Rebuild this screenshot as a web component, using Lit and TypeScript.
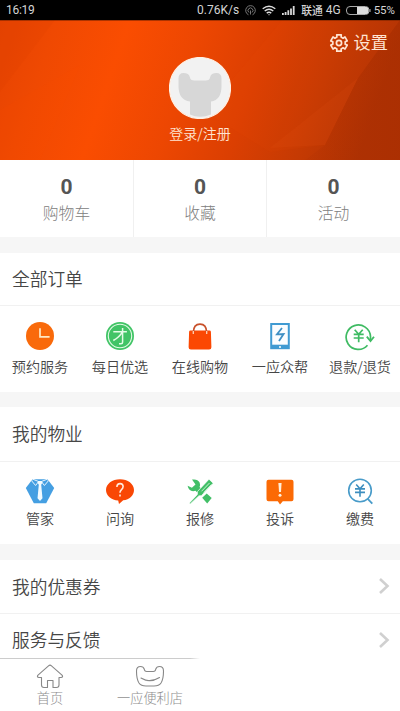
import { LitElement, html, svg, css, type SVGTemplateResult } from "lit";
import { customElement } from "lit/decorators.js";

interface Entry {
  label: string;
  icon: SVGTemplateResult;
}

// Every grid icon is drawn on a 30x30 canvas.
const clock = svg`<circle cx="15" cy="15" r="14" fill="#f96a0b"/><path d="M15 7.2v8.6h9.6" fill="none" stroke="#ffe9c4" stroke-width="1.7"/>`;
const group = svg`<circle cx="15" cy="15" r="14" fill="#41c466"/><circle cx="15" cy="15" r="11.7" fill="none" stroke="#e4fbe6" stroke-width="1.1"/><path d="M8.3 10.8h13.6M17.6 6.9v14.3q0 1.5-1.6 1.5h-2M17.3 11.2q-3 5.2-9 8.3" fill="none" stroke="#e4fbe6" stroke-width="1.5"/>`;
const bag = svg`<path d="M5.500 9.500h19q1.300 0 1.400 1.300l.5 15.500q0 2.300-2.300 2.300H5.900q-2.300 0-2.300-2.300l.5-15.500q.1-1.300 1.400-1.300z" fill="#fb4803"/><path d="M8.300 11.500C8.500 6 11 3.200 15 3.200s6.500 2.800 6.700 8.300" fill="none" stroke="#c8502a" stroke-width="1.700"/><path d="M8.300 10v3M21.700 10v3" stroke="#ffd2b4" stroke-width="1.300"/>`;
const phone = svg`<path d="M5.200 2h19.600v26.200H5.200z" fill="#3f9ad2"/><path d="M7.200 4h15.600v19.700H7.200z" fill="#fafdff"/><path d="M17 7l-5 6.300 6.600-.3-4.600 7" fill="none" stroke="#3f8fc4" stroke-width="1.800"/><circle cx="15" cy="26" r="1" fill="#fff"/>`;
const refund = svg`<path d="M22.500 24.200A12.200 12.200 0 1 1 25.500 15.500v3.500" fill="none" stroke="#3fbb63" stroke-width="1.700"/><path d="M21.800 15.700l3.700 4.300 3.500-4.300" fill="none" stroke="#3fbb63" stroke-width="1.800"/><path d="M9.700 8.700l4 4.500 4-4.500M8.700 13.300h10M8.700 17h10M13.700 13v8.300" fill="none" stroke="#3fbb63" stroke-width="1.700"/>`;
const butler = svg`<path d="M7.500 3.200h15L29.200 12l-8 15.300H8.800L.8 12z" fill="#459fe2"/><path d="M8 3.300l5.600 2.200-3 4-4-4.700zM22 3.300l-5.600 2.200 3 4 4-4.700z" fill="#459fe2" stroke="#e8f6ff" stroke-width="1"/><path d="M13.200 5h3.600l.6 1.800-1.200 2 1.300 13.500L15 25l-2.500-2.700 1.300-13.500-1.200-2z" fill="#f3fbff"/>`;
const ask = svg`<path d="M15 3.200c7.800 0 14 4.600 14 10.700 0 5.400-4.600 9.500-10.800 10.400L14 28l-.800-3.500C6.400 23.900 1 19.500 1 13.900 1 7.800 7.200 3.200 15 3.200z" fill="#f94705"/><path d="M11.900 11q.1-3.400 3.200-3.400 3 0 3 3 0 1.700-1.600 3-1.500 1.300-1.500 3.200M15 18.500v2" fill="none" stroke="#ffe9dc" stroke-width="1.600"/>`;
const repair = svg`<path d="M7 3.600q5.500-1 7.600 3 .9 2.200 0 4.400l5 5-3.800 4-5.300-5.200Q4 16.500 2.600 9.700l4.300 2 3.600-3.300z" fill="#42bf67"/><path d="M17.200 21.800l4.500-4.300 5 4.500-4.500 5.500z" fill="#42bf67"/><path d="M24 3.200l4.200 4-11.700 12.300-2.700.4-8.300 7.800-1 .2.200-1.100 7.600-8.200.3-3.200z" fill="#42bf67" stroke="#fff" stroke-width=".7"/><path d="M16.500 15.300l8-8.300M18.700 16.500l7.600-7.800" stroke="#e8fbe9" stroke-width=".8"/>`;
const complain = svg`<path d="M3.500 3.800h23q2 0 2 2v17.500q0 2-2 2h-8.700L15 28.500l-2.200-3.200H3.500q-2 0-2-2V5.800q0-2 2-2z" fill="#fb6a05"/><path d="M13.400 7h3.200l-.6 9h-2z" fill="#ffeeda"/><circle cx="15" cy="19.300" r="1.500" fill="#ffeeda"/>`;
const pay = svg`<circle cx="15" cy="14.500" r="11.300" fill="none" stroke="#489bc9" stroke-width="1.600"/><path d="M22.500 22.700l4.800 5" stroke="#489bc9" stroke-width="1.800"/><path d="M11.200 8.500l3.800 4.200 3.800-4.200M10 12.900h10M10 16.400h10M15 12.500v8.300" fill="none" stroke="#3d8ebf" stroke-width="1.600"/>`;

const orders: Entry[] = [
  { label: "预约服务", icon: clock },
  { label: "每日优选", icon: group },
  { label: "在线购物", icon: bag },
  { label: "一应众帮", icon: phone },
  { label: "退款/退货", icon: refund },
];
const property: Entry[] = [
  { label: "管家", icon: butler },
  { label: "问询", icon: ask },
  { label: "报修", icon: repair },
  { label: "投诉", icon: complain },
  { label: "缴费", icon: pay },
];
const stats = ["购物车", "收藏", "活动"];

function gearPath(): string {
  const pts: string[] = [];
  for (let i = 0; i < 6; i++) {
    const mid = (i * Math.PI) / 3 - Math.PI / 2;
    for (const [off, r] of [[-0.34, 6.3], [-0.27, 8.5], [0.27, 8.5], [0.34, 6.3]]) {
      pts.push(`${(10 + r * Math.cos(mid + off)).toFixed(2)} ${(10 + r * Math.sin(mid + off)).toFixed(2)}`);
    }
  }
  return `M${pts.join("L")}z`;
}

@customElement("app-root")
export class AppRoot extends LitElement {
  static styles = css`
    :host {
      display: flex;
      flex-direction: column;
      height: 711px;
      overflow: hidden;
      background: #fff;
      color: #464646;
      font-family: "Noto Sans CJK SC", sans-serif;
      font-weight: 350;
    }
    * { box-sizing: border-box; }
    svg { display: block; flex: none; }
    .status {
      flex: none;
      height: 20px;
      padding: 0 5px 0 6px;
      display: flex;
      align-items: center;
      background: #000;
      color: #d4d4d4;
      font: 12px/20px Roboto, "Noto Sans CJK SC", sans-serif;
      white-space: nowrap;
    }
    .time { flex: 1; letter-spacing: -0.3px; }
    .speed { letter-spacing: 0; margin-right: 6px; }
    .status svg { margin-right: 6px; }
    .carrier { font-size: 10.800px; line-height: 16px; padding-top: 3px; margin-right: 3px; font-weight: 500; }
    .net { margin-right: 5px; }
    .status svg.battery { margin-right: 3px; }
    .percent { font-size: 11.5px; }
    .hero {
      flex: none;
      height: 140px;
      display: grid;
      color: #ffe4d2;
    }
    .hero > * { grid-area: 1 / 1; }
    .settings {
      justify-self: end;
      align-self: start;
      display: flex;
      align-items: center;
      gap: 5px;
      height: 24px;
      margin: 10px 12px 0 0;
      font-size: 17.2px;
      line-height: 24px;
      font-weight: 400;
    }
    .settings svg { margin-top: 2px; }
    .profile {
      display: flex;
      flex-direction: column;
      align-items: center;
      padding-top: 37px;
      font-size: 14px;
      line-height: 20px;
      font-weight: 350;
      gap: 4px;
    }
    .stats {
      flex: none;
      height: 77px;
      display: grid;
      grid-template-columns: 133px 133px 134px;
    }
    .stat {
      display: flex;
      flex-direction: column;
      align-items: center;
      padding-top: 15px;
      border-left: 1px solid #f0f0f0;
    }
    .stat:first-child { border-left: 0; }
    .count { font: 700 21px/24px Roboto, sans-serif; color: #555; }
    .name { font-size: 15.8px; line-height: 24px; margin-top: 2px; color: #808080; font-weight: 300; }
    .gap { flex: none; height: 16px; background: #f6f6f6; }
    .gap.thin { height: 15px; }
    .title {
      flex: none;
      height: 53px;
      padding-left: 12px;
      font-size: 17.700px;
      line-height: 50px;
      border-bottom: 1px solid #f1f1f1;
    }
    .title.tall { height: 55px; line-height: 52px; }
    .grid {
      flex: none;
      height: 86px;
      display: grid;
      grid-template-columns: repeat(5, 80px);
      padding-top: 15px;
    }
    .grid.low { height: 82px; padding-top: 14px; }
    .item {
      display: flex;
      flex-direction: column;
      align-items: center;
      gap: 5px;
      font-size: 14.100px;
      line-height: 20px;
      white-space: nowrap;
    }
    .low .item { gap: 2px; }
    .row {
      flex: none;
      display: flex;
      align-items: center;
      justify-content: space-between;
      height: 54px;
      padding: 0 10px 0 12px;
      font-size: 17.700px;
      line-height: 50px;
      border-bottom: 1px solid #f1f1f1;
    }
    .row span { margin-top: -2px; }
    .row svg { margin-top: -1px; }
    .row.last { height: 44px; border: 0; align-items: flex-start; }
    .row.last span { margin-top: 0; }
    .row.last svg { margin-top: 17px; }
    .tabs {
      flex: 1;
      display: flex;
      background: linear-gradient(90deg, #ccc 0 190px, #fff 200px) top / 100% 1px no-repeat;
      color: #8e8e8e;
    }
    .tab {
      width: 100px;
      display: flex;
      flex-direction: column;
      align-items: center;
      padding-top: 6px;
      font-size: 13.200px;
      line-height: 18px;
      font-weight: 300;
      white-space: nowrap;
    }
  `;

  private grid(items: Entry[], extra: string) {
    return html`<div class="grid ${extra}">
      ${items.map(
        (it) => html`<div class="item"><svg width="30" height="30" viewBox="0 0 30 30">${it.icon}</svg><span>${it.label}</span></div>`
      )}
    </div>`;
  }

  private chevron() {
    return html`<svg width="12" height="18" viewBox="0 0 12 18"><path d="M2 2l7.500 7L2 16" fill="none" stroke="#d0d0d0" stroke-width="2.600"/></svg>`;
  }

  render() {
    return html`
      <div class="status">
        <span class="time">16:19</span>
        <span class="speed">0.76K/s</span>
        <svg width="11" height="11" viewBox="0 0 11 11" fill="none" stroke="#777" stroke-width="1"><path d="M3.500 9.800a4.800 4.800 0 1 1 4 0M4 7.500a2.500 2.500 0 1 1 3 0M5.500 5.500v4"/></svg>
        <svg width="14" height="11" viewBox="0 0 14 11" fill="none" stroke="#ddd" stroke-width="1.400"><path d="M.7 3.800q6.300-5 12.600 0M2.700 6q4.300-3.400 8.600 0M4.700 8.100q2.300-1.700 4.600 0"/><circle cx="7" cy="9.700" r=".6" fill="#ddd" stroke="none"/></svg>
        <svg width="13" height="9" viewBox="0 0 13 9" fill="#d8d8d8"><path d="M0 7h1.800v2H0zM2.700 6h1.800v3H2.700zM5.400 4.300h1.800V9H5.400zM8.100 2.500h1.800V9H8.100zM10.800 0h1.800v9h-1.800z"/></svg>
        <span class="carrier">联通</span><span class="net">4G</span>
        <svg class="battery" width="25" height="9" viewBox="0 0 25 9"><rect x=".5" y=".5" width="22.500" height="8" rx="3.500" fill="none" stroke="#aaa"/><path d="M11 1h9.500q2 0 2 3.500T20.500 8H11z" fill="#ddd"/><path d="M24 3v3" stroke="#bbb"/></svg>
        <span class="percent">55%</span>
      </div>

      <div class="hero">
        <svg width="400" height="140" viewBox="0 0 400 140">
          <defs>
            <linearGradient id="base" x1="0" y1="0" x2="1" y2="0.12">
              <stop offset="0" stop-color="#e54302"/><stop offset=".14" stop-color="#ef4902"/><stop offset=".32" stop-color="#fa4d01"/>
              <stop offset=".5" stop-color="#ed4702"/><stop offset=".68" stop-color="#db3f02"/><stop offset=".85" stop-color="#c53a03"/><stop offset="1" stop-color="#b13304"/>
            </linearGradient>
            <linearGradient id="dark" x1="0" y1="0" x2="1" y2="0">
              <stop offset="0" stop-color="#a62c00" stop-opacity=".1"/><stop offset="1" stop-color="#a62c00" stop-opacity=".5"/>
            </linearGradient>
          </defs>
          <rect width="400" height="140" fill="url(#base)"/>
          <path d="M55 0L0 72V0z" fill="#d93c00" opacity=".16"/>
          <path d="M0 90L80 45 40 140H0z" fill="#fb4b00" opacity=".1"/>
          <path d="M282 0L205 92 270 132 325 125 358 59 400 0z" fill="#ff5a10" opacity=".06"/>
          <path d="M400 0L358 58 325 125 305 140H400z" fill="url(#dark)"/>
          <path d="M358 58L270 128 325 125z" fill="#ff6a20" opacity=".08"/>
          <path d="M0 .5h400" stroke="#7d2500" opacity=".6"/>
        </svg>
        <div class="profile">
          <svg width="62" height="62" viewBox="0 0 62 62">
            <circle cx="31" cy="31" r="30.500" fill="#f2f2f2" stroke="#fff0e4" stroke-width="1.200"/>
            <path d="M9.500 21.500q0-5.500 5-5.500 5.500 0 6.300 4 .5 3.500 4.500 3.500h11.400q4 0 4.500-3.500.8-4 6.300-4 5 0 5 5.500v7.500q0 14-10.500 15.500v13q-11 4.500-21 0v-13q-11.500-1.500-11.500-15.500z" fill="#d7d7d7"/>
          </svg>
          <span>登录/注册</span>
        </div>
        <div class="settings">
          <svg width="20" height="20" viewBox="0 0 20 20" fill="none" stroke="#ffe4d2" stroke-width="1.700" stroke-linejoin="round"><path d="${gearPath()}"/><circle cx="10" cy="10" r="2.600"/></svg>
          <span>设置</span>
        </div>
      </div>

      <div class="stats">
        ${stats.map((s) => html`<div class="stat"><span class="count">0</span><span class="name">${s}</span></div>`)}
      </div>
      <div class="gap"></div>
      <div class="title">全部订单</div>
      ${this.grid(orders, "")}
      <div class="gap thin"></div>
      <div class="title tall">我的物业</div>
      ${this.grid(property, "low")}
      <div class="gap"></div>
      <div class="row"><span>我的优惠券</span>${this.chevron()}</div>
      <div class="row last"><span>服务与反馈</span>${this.chevron()}</div>

      <div class="tabs">
        <div class="tab">
          <svg width="28" height="25" viewBox="0 0 28 25" fill="none" stroke="#888" stroke-width="1.100" stroke-linejoin="round"><path d="M12.500 1.800q1.500-1.300 3 0L26 11.200q1.500 2-1 2.300h-2V21q0 2.500-2.500 2.500H17v-7h-5.500v7H8q-2.500 0-2.500-2.500v-7.500H3q-2.500-.3-1-2.300z"/></svg>
          <span>首页</span>
        </div>
        <div class="tab">
          <svg width="30" height="25" viewBox="0 0 30 25" fill="none" stroke="#888" stroke-width="1.100" stroke-linecap="round"><path d="M1.500 7q0-4.500 4-4.500 3 0 3.700 2.500.3 2.500 2.500 2.500h6.600q2.200 0 2.500-2.500.7-2.500 3.700-2.500 4 0 4 4.500 0 8-2.500 12-2 3-7 3h-8q-5 0-7-3-2.500-4-2.500-12z"/><path d="M6 14q9 5.500 18.500-.5M6.500 14.300q8.500 5 17-.3"/></svg>
          <span>一应便利店</span>
        </div>
      </div>
    `;
  }
}
